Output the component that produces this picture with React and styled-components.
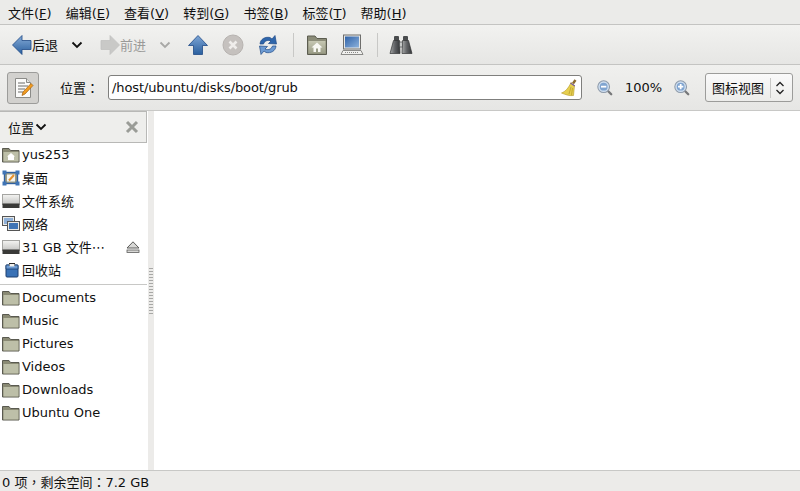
import React from 'react'
import styled, { createGlobalStyle } from 'styled-components'

const GlobalStyle = createGlobalStyle`
  html, body { margin: 0; padding: 0; background: #fff; }
  body {
    font-family: "DejaVu Sans", "Noto Sans CJK SC", sans-serif;
    font-size: 13px;
    color: #101010;
  }
`

const BackIcon = () => (
  <svg width="22" height="22" viewBox="0 0 22 22">
    <defs>
      <linearGradient id="g-back" x1="0" y1="0" x2="0" y2="1">
        <stop offset="0" stopColor="#86acd8" />
        <stop offset="1" stopColor="#2a5f9e" />
      </linearGradient>
    </defs>
    <path d="M1.5 11 L11 1.5 V6.5 H20 V15.5 H11 V20.5 Z" fill="url(#g-back)" stroke="#204a87" strokeWidth="0.8" />
  </svg>
)

const ForwardIcon = () => (
  <svg width="22" height="22" viewBox="0 0 22 22">
    <path d="M20.5 11 L11 1.5 V6.5 H2 V15.5 H11 V20.5 Z" fill="#c9c9c7" stroke="#c2c2c0" strokeWidth="0.8" />
  </svg>
)

const UpIcon = () => (
  <svg width="22" height="22" viewBox="0 0 22 22">
    <defs>
      <linearGradient id="g-up" x1="0" y1="0" x2="0" y2="1">
        <stop offset="0" stopColor="#7ea6d6" />
        <stop offset="1" stopColor="#2a5f9e" />
      </linearGradient>
    </defs>
    <path d="M11 1.5 L20.5 11.5 H15.5 V20.5 H6.5 V11.5 H1.5 Z" fill="url(#g-up)" stroke="#204a87" strokeWidth="0.8" />
  </svg>
)

const StopIcon = () => (
  <svg width="22" height="22" viewBox="0 0 22 22">
    <circle cx="11" cy="11" r="10" fill="#c5c1be" stroke="#b7b3b0" />
    <path d="M7.5 7.5 L14.5 14.5 M14.5 7.5 L7.5 14.5" stroke="#efedeb" strokeWidth="2.6" />
  </svg>
)

const ReloadIcon = () => (
  <svg width="22" height="22" viewBox="0 0 22 22">
    <path d="M3 10 C3.5 5 8 2.5 13 3.5 L15 5 L18 1.5 L19.5 10 L11.5 9.5 L14 7 C10.5 5.5 7.5 7 6.5 10 Z" fill="#2f66ab" stroke="#204a87" strokeWidth="0.7" />
    <path d="M19 12 C18.5 17 14 19.5 9 18.5 L7 17 L4 20.5 L2.5 12 L10.5 12.5 L8 15 C11.5 16.5 14.5 15 15.5 12 Z" fill="#6c9ad2" stroke="#204a87" strokeWidth="0.7" />
  </svg>
)

const HomeFolderIcon = () => (
  <svg width="22" height="22" viewBox="0 0 22 22">
    <defs>
      <linearGradient id="g-home" x1="0" y1="0" x2="0" y2="1">
        <stop offset="0" stopColor="#c6c7b2" />
        <stop offset="1" stopColor="#9a9c86" />
      </linearGradient>
    </defs>
    <path d="M1.5 20.5 V2 H9 L11 4.5 H20.5 V20.5 Z" fill="#8b8c78" stroke="#5c5d50" />
    <rect x="2.5" y="7" width="17" height="12.5" fill="url(#g-home)" />
    <path d="M11 8.5 L16.5 13.5 H14.5 V18 H7.5 V13.5 H5.5 Z" fill="#f7f7f2" />
    <rect x="10" y="14.5" width="2" height="3.5" fill="#9a9c86" />
  </svg>
)

const ComputerIcon = () => (
  <svg width="24" height="22" viewBox="-1 0 24 22">
    <defs>
      <linearGradient id="g-screen" x1="0" y1="0" x2="1" y2="1">
        <stop offset="0" stopColor="#2f62a8" />
        <stop offset="1" stopColor="#8db2dc" />
      </linearGradient>
    </defs>
    <rect x="2.5" y="1" width="17" height="14" fill="#e8e8e6" stroke="#6e6e6c" />
    <rect x="4" y="2.5" width="14" height="11" fill="url(#g-screen)" />
    <path d="M2 16.5 H20 L22 20.5 H0 Z" fill="#f0f0ee" stroke="#8a8a88" />
    <path d="M4 18.5 H18" stroke="#8a8a88" strokeDasharray="1 1" />
  </svg>
)

const BinocularsIcon = () => (
  <svg width="24" height="22" viewBox="0 0 24 22">
    <defs>
      <linearGradient id="g-bino" x1="0" y1="0" x2="1" y2="0">
        <stop offset="0" stopColor="#a6a8a8" />
        <stop offset="0.5" stopColor="#5f6164" />
        <stop offset="1" stopColor="#353739" />
      </linearGradient>
    </defs>
    <rect x="5" y="2" width="5" height="5" rx="1" fill="#4a4c4e" />
    <rect x="14" y="2" width="5" height="5" rx="1" fill="#4a4c4e" />
    <path d="M4.5 6.5 H10.5 L11 19.5 H1 Z" fill="url(#g-bino)" stroke="#333537" strokeWidth="0.7" />
    <path d="M13.5 6.5 H19.5 L23 19.5 H13 Z" fill="url(#g-bino)" stroke="#333537" strokeWidth="0.7" />
    <rect x="10.5" y="8" width="3" height="5" fill="#c6c8c8" stroke="#47494b" strokeWidth="0.7" />
  </svg>
)

const NoteIcon = () => (
  <svg width="22" height="22" viewBox="0 0 22 22">
    <path d="M3.5 1.5 H14.5 L18.5 5.5 V20.5 H3.5 Z" fill="#fbfbfa" stroke="#8b8b88" />
    <path d="M14.5 1.5 V5.5 H18.5" fill="#e5e5e2" stroke="#8b8b88" />
    <path d="M6 6 H13 M6 9 H16 M6 12 H13 M6 15 H11" stroke="#6c6c6a" strokeWidth="1" />
    <path d="M10 18.5 L11 15 L19 6.5 L21 8.5 L13 17 Z" fill="#f29c1f" stroke="#a35f0a" strokeWidth="0.7" />
  </svg>
)

const BroomIcon = () => (
  <svg width="18" height="18" viewBox="0 0 18 18">
    <path d="M13 4.5 L15.5 1" stroke="#8a6a2e" strokeWidth="2.4" />
    <path d="M11 3.5 L14.5 6.5 L13.5 16.5 C10 17 6 16 1.5 14 C5.5 12.5 8.5 9 11 3.5 Z" fill="#e6cf4e" stroke="#b5982a" strokeWidth="0.6" />
    <path d="M11 8 L9 15 M12.5 9 L11.5 16" stroke="#b5982a" strokeWidth="0.7" />
    <path d="M10.5 4 L14.8 7" stroke="#7a5fa0" strokeWidth="1.2" />
  </svg>
)

const ZoomIcon = ({ plus }) => (
  <svg width="16" height="16" viewBox="0 0 18 18">
    <path d="M11.5 11.5 L16 16" stroke="#77787a" strokeWidth="2.6" strokeLinecap="round" />
    <circle cx="7.5" cy="7.5" r="6.6" fill="#cfdeef" stroke="#8e9bab" strokeWidth="1.2" />
    <circle cx="7.5" cy="7.5" r="4.4" fill="#7fa4d0" />
    <path d={plus ? 'M4.5 7.5 H10.5 M7.5 4.5 V10.5' : 'M4.5 7.5 H10.5'} stroke="#fff" strokeWidth="2" />
  </svg>
)

const Chevron = ({ color = '#101010' }) => (
  <svg width="12" height="8" viewBox="0 0 12 8">
    <path d="M1.5 1.5 L6 6 L10.5 1.5" fill="none" stroke={color} strokeWidth="1.8" />
  </svg>
)

const SelectArrows = () => (
  <svg width="10" height="16" viewBox="0 0 10 16">
    <path d="M1.5 6 L5 2.5 L8.5 6 M1.5 10 L5 13.5 L8.5 10" fill="none" stroke="#222" strokeWidth="1.3" />
  </svg>
)

const CloseX = () => (
  <svg width="14" height="14" viewBox="0 0 14 14">
    <path d="M2 2 L12 12 M12 2 L2 12" stroke="#9a9c97" strokeWidth="3" />
  </svg>
)

const EjectIcon = () => (
  <svg width="14" height="12" viewBox="0 0 14 12">
    <path d="M7 0.8 L13 7 H1 Z" fill="#d8d8d6" stroke="#5c5c5a" />
    <rect x="1" y="9" width="12" height="2.4" fill="#d8d8d6" stroke="#5c5c5a" strokeWidth="0.8" />
  </svg>
)

const SmallFolder = () => (
  <svg width="18" height="16" viewBox="0 0 18 16">
    <path d="M0.5 15 V1.5 H7 L8.5 3.5 H17 V15 Z" fill="#8a8a74" stroke="#5a5a50" />
    <rect x="1.5" y="5" width="15" height="9.5" fill="#bdbfa8" />
  </svg>
)

const HomeSmall = () => (
  <svg width="18" height="16" viewBox="0 0 18 16">
    <path d="M0.5 15 V1.5 H7 L8.5 3.5 H17 V15 Z" fill="#8a8a74" stroke="#5a5a50" />
    <rect x="1.5" y="5" width="15" height="9.5" fill="#bdbfa8" />
    <path d="M9 6 L13 9.5 H12 V13 H6 V9.5 H5 Z" fill="#fff" />
  </svg>
)

const DesktopIcon = () => (
  <svg width="18" height="16" viewBox="0 0 18 16">
    <rect x="2.5" y="2.5" width="13" height="11" fill="#9a9c86" stroke="#2f5f9e" strokeWidth="1.4" />
    <rect x="5" y="4.5" width="8" height="7" fill="#f4f4f0" />
    <rect x="0.5" y="0.5" width="4" height="4" fill="#3f74b5" />
    <rect x="13.5" y="0.5" width="4" height="4" fill="#3f74b5" />
    <rect x="0.5" y="11.5" width="4" height="4" fill="#3f74b5" />
    <rect x="13.5" y="11.5" width="4" height="4" fill="#3f74b5" />
    <path d="M7 10.5 L12 5" stroke="#e8912a" strokeWidth="2" />
  </svg>
)

const DriveIcon = () => (
  <svg width="18" height="16" viewBox="0 0 18 16">
    <defs>
      <linearGradient id="g-drive" x1="0" y1="0" x2="0" y2="1">
        <stop offset="0" stopColor="#f4f4f2" />
        <stop offset="1" stopColor="#c4c4c2" />
      </linearGradient>
    </defs>
    <rect x="0.5" y="1.5" width="17" height="10" fill="url(#g-drive)" stroke="#a5a5a2" />
    <rect x="0.5" y="10.5" width="17" height="4.5" fill="#3a3a38" />
  </svg>
)

const NetworkIcon = () => (
  <svg width="18" height="16" viewBox="0 0 18 16">
    <rect x="0.5" y="0.5" width="12" height="9" fill="#e8e8e6" stroke="#555" />
    <rect x="2" y="2" width="9" height="6" fill="#8fb0d8" />
    <rect x="5.5" y="5.5" width="12" height="9" fill="#e8e8e6" stroke="#555" />
    <rect x="7" y="7" width="9" height="6" fill="#3f74b5" />
  </svg>
)

const TrashIcon = () => (
  <svg width="18" height="16" viewBox="0 0 18 16">
    <rect x="4" y="3" width="12" height="12" rx="1" fill="#3a72b6" stroke="#1d3f6e" />
    <path d="M4 3 H16 V7 H4 Z" fill="#6c9ad2" stroke="#1d3f6e" strokeWidth="0.8" />
    <rect x="7" y="1" width="6" height="3" fill="#2a2a2a" />
    <rect x="7.5" y="2" width="5" height="2.5" fill="#f0f0ee" />
  </svg>
)

const places = [
  { name: 'yus253', icon: <HomeSmall /> },
  { name: '桌面', icon: <DesktopIcon /> },
  { name: '文件系统', icon: <DriveIcon /> },
  { name: '网络', icon: <NetworkIcon /> },
  { name: '31 GB 文件⋯', icon: <DriveIcon />, eject: true },
  { name: '回收站', icon: <TrashIcon /> },
]

const bookmarks = ['Documents', 'Music', 'Pictures', 'Videos', 'Downloads', 'Ubuntu One']

const menus = [
  ['文件', 'F'], ['编辑', 'E'], ['查看', 'V'], ['转到', 'G'], ['书签', 'B'], ['标签', 'T'], ['帮助', 'H'],
]

const App = () => (
  <>
    <GlobalStyle />
    <Window>
      <MenuBar>
        {menus.map(([label, key]) => (
          <MenuItem key={key}>{label}(<u>{key}</u>)</MenuItem>
        ))}
      </MenuBar>

      <ToolBar>
        <ToolButton><BackIcon /><ToolLabel>后退</ToolLabel></ToolButton>
        <DropArrow><Chevron /></DropArrow>
        <ToolButton $gap><ForwardIcon /><ToolLabel $off>前进</ToolLabel></ToolButton>
        <DropArrow><Chevron color="#a8a8a6" /></DropArrow>
        <IconSlot><UpIcon /></IconSlot>
        <IconSlot><StopIcon /></IconSlot>
        <IconSlot><ReloadIcon /></IconSlot>
        <Divider />
        <IconSlot><HomeFolderIcon /></IconSlot>
        <IconSlot><ComputerIcon /></IconSlot>
        <Divider />
        <IconSlot><BinocularsIcon /></IconSlot>
      </ToolBar>

      <LocationBar>
        <ToggleButton><NoteIcon /></ToggleButton>
        <LocationLabel>位置：</LocationLabel>
        <PathField>
          <PathText>/host/ubuntu/disks/boot/grub</PathText>
          <BroomIcon />
        </PathField>
        <ZoomGroup>
          <ZoomIcon />
          <ZoomValue>100%</ZoomValue>
          <ZoomIcon plus />
        </ZoomGroup>
        <ViewSelect>
          <ViewLabel>图标视图</ViewLabel>
          <SelectSep />
          <SelectArrows />
        </ViewSelect>
      </LocationBar>

      <Body>
        <SidePanel>
          <PanelHeader>
            <PanelTitle>位置<Chevron /></PanelTitle>
            <CloseX />
          </PanelHeader>
          <PlaceList>
            {places.map((p) => (
              <PlaceRow key={p.name}>
                <PlaceIcon>{p.icon}</PlaceIcon>
                <PlaceName>{p.name}</PlaceName>
                {p.eject && <EjectSlot><EjectIcon /></EjectSlot>}
              </PlaceRow>
            ))}
            <ListSeparator />
            {bookmarks.map((name) => (
              <PlaceRow key={name}>
                <PlaceIcon><SmallFolder /></PlaceIcon>
                <PlaceName>{name}</PlaceName>
              </PlaceRow>
            ))}
          </PlaceList>
        </SidePanel>
        <PaneHandle><Grip /></PaneHandle>
        <Content />
      </Body>

      <StatusBar>0 项，剩余空间：7.2 GB</StatusBar>
    </Window>
  </>
)

export default App

const Window = styled.div`
  width: 800px;
  height: 491px;
  display: flex;
  flex-direction: column;
  overflow: hidden;
  background: #edecea;
`

const MenuBar = styled.div`
  height: 24px;
  flex: none;
  display: flex;
  align-items: center;
  padding-left: 8px;
  gap: 14px;
  background: #ebebe9;
  border-bottom: 1px solid #c4c4c2;
  font-size: 13px;
`

const MenuItem = styled.span`
  white-space: nowrap;
`

const ToolBar = styled.div`
  height: 39px;
  flex: none;
  display: flex;
  align-items: center;
  padding-left: 11px;
  background: linear-gradient(#f2f2f0, #e6e6e4);
  border-bottom: 1px solid #c4c4c2;
`

const ToolButton = styled.div`
  display: flex;
  align-items: center;
  margin-left: ${(props) => (props.$gap ? '7px' : '0')};
`

const ToolLabel = styled.span`
  margin-left: -1px;
  font-size: 13px;
  color: ${(props) => (props.$off ? '#9a9a98' : '#101010')};
`

const DropArrow = styled.div`
  width: 30px;
  margin-left: 4px;
  display: flex;
  justify-content: center;
`

const IconSlot = styled.div`
  width: 35px;
  display: flex;
  justify-content: center;
`

const Divider = styled.div`
  width: 1px;
  height: 24px;
  margin: 0 5px 0 8px;
  background: #c8c8c6;
`

const LocationBar = styled.div`
  height: 45px;
  flex: none;
  display: flex;
  align-items: center;
  padding: 0 7px;
  background: linear-gradient(#f0f0ee, #e6e6e4);
  border-bottom: 1px solid #c8c8c6;
`

const ToggleButton = styled.div`
  width: 32px;
  height: 32px;
  box-sizing: border-box;
  display: flex;
  align-items: center;
  justify-content: center;
  border: 1px solid #9c9c9a;
  border-radius: 3px;
  background: #d2d1ce;
`

const LocationLabel = styled.span`
  margin-left: 21px;
  width: 48px;
  font-size: 13px;
  font-family: "DejaVu Sans", "Noto Sans CJK TC", sans-serif;
`

const PathField = styled.div`
  width: 474px;
  height: 25px;
  box-sizing: border-box;
  display: flex;
  align-items: center;
  justify-content: space-between;
  padding: 0 3px;
  background: #fff;
  border: 1px solid #7f7f7d;
  border-radius: 3px;
`

const PathText = styled.span`
  font-size: 13px;
  letter-spacing: -0.1px;
`

const ZoomGroup = styled.div`
  display: flex;
  align-items: center;
  margin-left: 15px;
`

const ZoomValue = styled.span`
  width: 61px;
  text-align: center;
  font-size: 13px;
`

const ViewSelect = styled.div`
  width: 88px;
  height: 29px;
  margin-left: 15px;
  box-sizing: border-box;
  display: flex;
  align-items: center;
  padding: 0 7px 0 6px;
  background: linear-gradient(#fafafa, #ececea);
  border: 1px solid #9c9c9a;
  border-radius: 3px;
`

const ViewLabel = styled.span`
  font-size: 13px;
  white-space: nowrap;
`

const SelectSep = styled.div`
  width: 1px;
  height: 20px;
  margin: 0 4px 0 auto;
  background: #c8c8c6;
`

const Body = styled.div`
  flex: 1;
  min-height: 0;
  display: flex;
  background: #fff;
`

const SidePanel = styled.div`
  width: 148px;
  flex: none;
  display: flex;
  flex-direction: column;
  background: #fff;
`

const PanelHeader = styled.div`
  height: 32px;
  box-sizing: border-box;
  flex: none;
  display: flex;
  align-items: center;
  justify-content: space-between;
  margin-right: 1px;
  padding: 0 7px 0 8px;
  background: #eeeeec;
  border: 1px solid #b8b8b6;
  border-left: 0;
`

const PanelTitle = styled.span`
  display: flex;
  align-items: center;
  gap: 1px;
  font-size: 13px;
`

const PlaceList = styled.div`
  padding-top: 0;
`

const PlaceRow = styled.div`
  height: 23px;
  display: flex;
  align-items: center;
  padding-left: 2px;
`

const PlaceIcon = styled.span`
  width: 20px;
  height: 16px;
  flex: none;
  display: flex;
`

const PlaceName = styled.span`
  font-size: 13px;
  white-space: nowrap;
`

const EjectSlot = styled.span`
  margin-left: auto;
  margin-right: 8px;
  display: flex;
`

const ListSeparator = styled.div`
  height: 1px;
  margin: 3px 1px 1px 0;
  background: #c8c8c6;
`

const PaneHandle = styled.div`
  width: 6px;
  flex: none;
  display: flex;
  align-items: center;
  justify-content: center;
  background: #ecebe9;
`

const Grip = styled.div`
  width: 4px;
  height: 48px;
  background-image: radial-gradient(#a8a8a6 0.7px, transparent 0.8px);
  background-size: 2px 3px;
`

const Content = styled.div`
  flex: 1;
  background: #fff;
`

const StatusBar = styled.div`
  height: 20px;
  flex: none;
  display: flex;
  align-items: center;
  padding-left: 2px;
  background: #ecebe9;
  border-top: 1px solid #c8c8c6;
  font-size: 13px;
  font-family: "DejaVu Sans", "Noto Sans CJK TC", sans-serif;
`
